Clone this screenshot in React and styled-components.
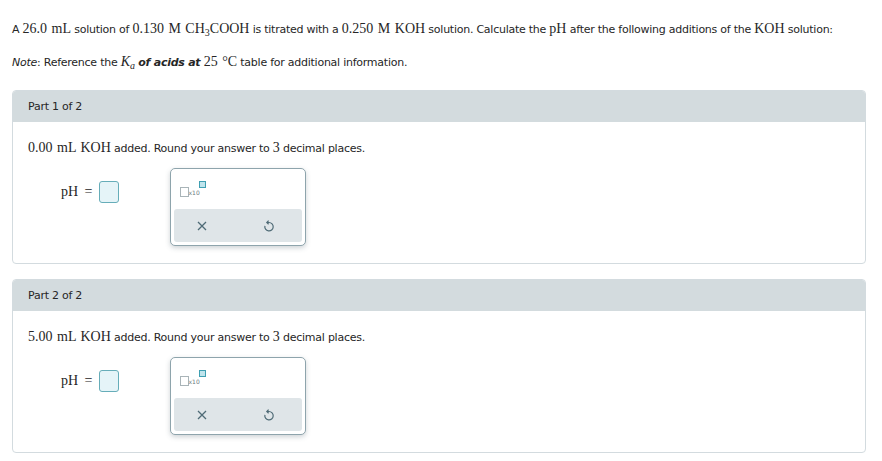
import styled, { createGlobalStyle } from "styled-components";

const GlobalStyle = createGlobalStyle`
  body {
    margin: 0;
    background: #ffffff;
    font-family: "DejaVu Sans", Verdana, sans-serif;
    font-size: 11px;
    letter-spacing: -0.25px;
    color: #262626;
  }
`;

const Page = styled.div`
  padding: 20px 16px 8px 12px;
`;

const Prompt = styled.p`
  margin: 0;
  line-height: 18px;
`;

const NoteLine = styled.p`
  margin: 14px 0 0;
  line-height: 18px;
`;

const M = styled.span`
  font-family: "Liberation Serif", "Times New Roman", serif;
  font-size: 14px;
  letter-spacing: 0;
  word-spacing: 1px;
  font-style: ${({ $italic }) => ($italic ? "italic" : "normal")};
`;

const Sub = styled.sub`
  font-size: 10px;
  vertical-align: -3px;
  line-height: 0;
`;

const Parts = styled.div`
  display: flex;
  flex-direction: column;
  gap: 15px;
  margin-top: 18px;
`;

const Card = styled.section`
  border: 1px solid #d3dbdf;
  border-radius: 4px;
  overflow: hidden;
`;

const CardHeader = styled.div`
  height: 31px;
  display: flex;
  align-items: center;
  padding-left: 15px;
  background: #d3dbde;
  color: #262626;
`;

const CardBody = styled.div`
  padding: 17px 15px 17px 15px;
`;

const Question = styled.p`
  margin: 0;
  line-height: 18px;
`;

const AnswerRow = styled.div`
  display: flex;
  align-items: flex-start;
  margin-top: 10px;
  padding-left: 33px;
`;

const AnswerField = styled.div`
  display: flex;
  align-items: center;
  margin-top: 13px;
  gap: 6px;
`;

const PhLabel = styled(M)`
  word-spacing: 3px;
`;

const InputBox = styled.div`
  width: 18px;
  height: 20px;
  border: 1px solid #66adb9;
  border-radius: 3px;
  background: #e5f4f8;
`;

const Palette = styled.div`
  box-sizing: border-box;
  margin-left: 51px;
  width: 136px;
  height: 78px;
  border: 1px solid #8ea4ac;
  border-radius: 5px;
  background: #ffffff;
  box-shadow: 0 2px 5px rgba(60, 80, 90, 0.25);
  padding: 0 3px 3px;
  display: flex;
  flex-direction: column;
`;

const PaletteTop = styled.div`
  flex: 1;
  display: flex;
  align-items: center;
  padding: 2px 0 0 6px;
`;

const Sci = styled.div`
  position: relative;
  width: 30px;
  height: 18px;
`;

const GreyBox = styled.div`
  position: absolute;
  left: 0;
  top: 6px;
  width: 7px;
  height: 8px;
  border: 1px solid #a9b4b8;
  background: #fff;
`;

const Ten = styled.span`
  position: absolute;
  left: 9px;
  top: 8px;
  font-size: 6px;
  letter-spacing: 0;
  color: #6c7a80;
`;

const TealBox = styled.div`
  position: absolute;
  left: 19px;
  top: 0;
  width: 5px;
  height: 5px;
  border: 1px solid #3f9fb2;
  background: #bfe4ec;
`;

const ButtonBar = styled.div`
  height: 33px;
  background: #dfe5e8;
  border-radius: 3px;
  display: flex;
  align-items: center;
  justify-content: space-between;
  padding: 0 23px 0 18px;
`;

const IconButton = styled.button`
  border: 0;
  background: none;
  padding: 0;
  width: 20px;
  height: 20px;
  display: flex;
  align-items: center;
  justify-content: center;
  color: #4f6b76;
`;

function CloseIcon() {
  return (
    <svg width="10" height="10" viewBox="0 0 10 10">
      <path d="M1 1 L9 9 M9 1 L1 9" stroke="currentColor" strokeWidth="1.3" fill="none" />
    </svg>
  );
}

function UndoIcon() {
  return (
    <svg width="12" height="13" viewBox="0 0 12 13">
      <path
        d="M4 3.5 L6 3.5 A4.2 4.2 0 1 1 1.9 6.8"
        stroke="currentColor"
        strokeWidth="1.2"
        fill="none"
      />
      <path d="M5.6 1.6 L3.8 3.5 L5.6 5.2" stroke="currentColor" strokeWidth="1.2" fill="none" />
    </svg>
  );
}

function Part({ index, volume }) {
  return (
    <Card>
      <CardHeader>Part {index} of 2</CardHeader>
      <CardBody>
        <Question>
          <M>{volume} mL KOH</M> added. Round your answer to <M>3</M> decimal places.
        </Question>
        <AnswerRow>
          <AnswerField>
            <PhLabel>pH =</PhLabel>
            <InputBox />
          </AnswerField>
          <Palette>
            <PaletteTop>
              <Sci>
                <GreyBox />
                <Ten>x10</Ten>
                <TealBox />
              </Sci>
            </PaletteTop>
            <ButtonBar>
              <IconButton aria-label="clear">
                <CloseIcon />
              </IconButton>
              <IconButton aria-label="undo">
                <UndoIcon />
              </IconButton>
            </ButtonBar>
          </Palette>
        </AnswerRow>
      </CardBody>
    </Card>
  );
}

export default function App() {
  return (
    <>
      <GlobalStyle />
      <Page>
        <Prompt>
          A <M>26.0 mL</M> solution of <M>0.130 M CH<Sub>3</Sub>COOH</M> is titrated with a{" "}
          <M>0.250 M KOH</M> solution. Calculate the <M>pH</M> after the following additions of the{" "}
          <M>KOH</M> solution:
        </Prompt>
        <NoteLine>
          <i>Note</i>: Reference the{" "}
          <M $italic>
            K<Sub>a</Sub>
          </M>{" "}
          <b>
            <i>of acids at</i>
          </b>{" "}
          <M>25 °C</M> table for additional information.
        </NoteLine>
        <Parts>
          <Part index={1} volume="0.00" />
          <Part index={2} volume="5.00" />
        </Parts>
      </Page>
    </>
  );
}
